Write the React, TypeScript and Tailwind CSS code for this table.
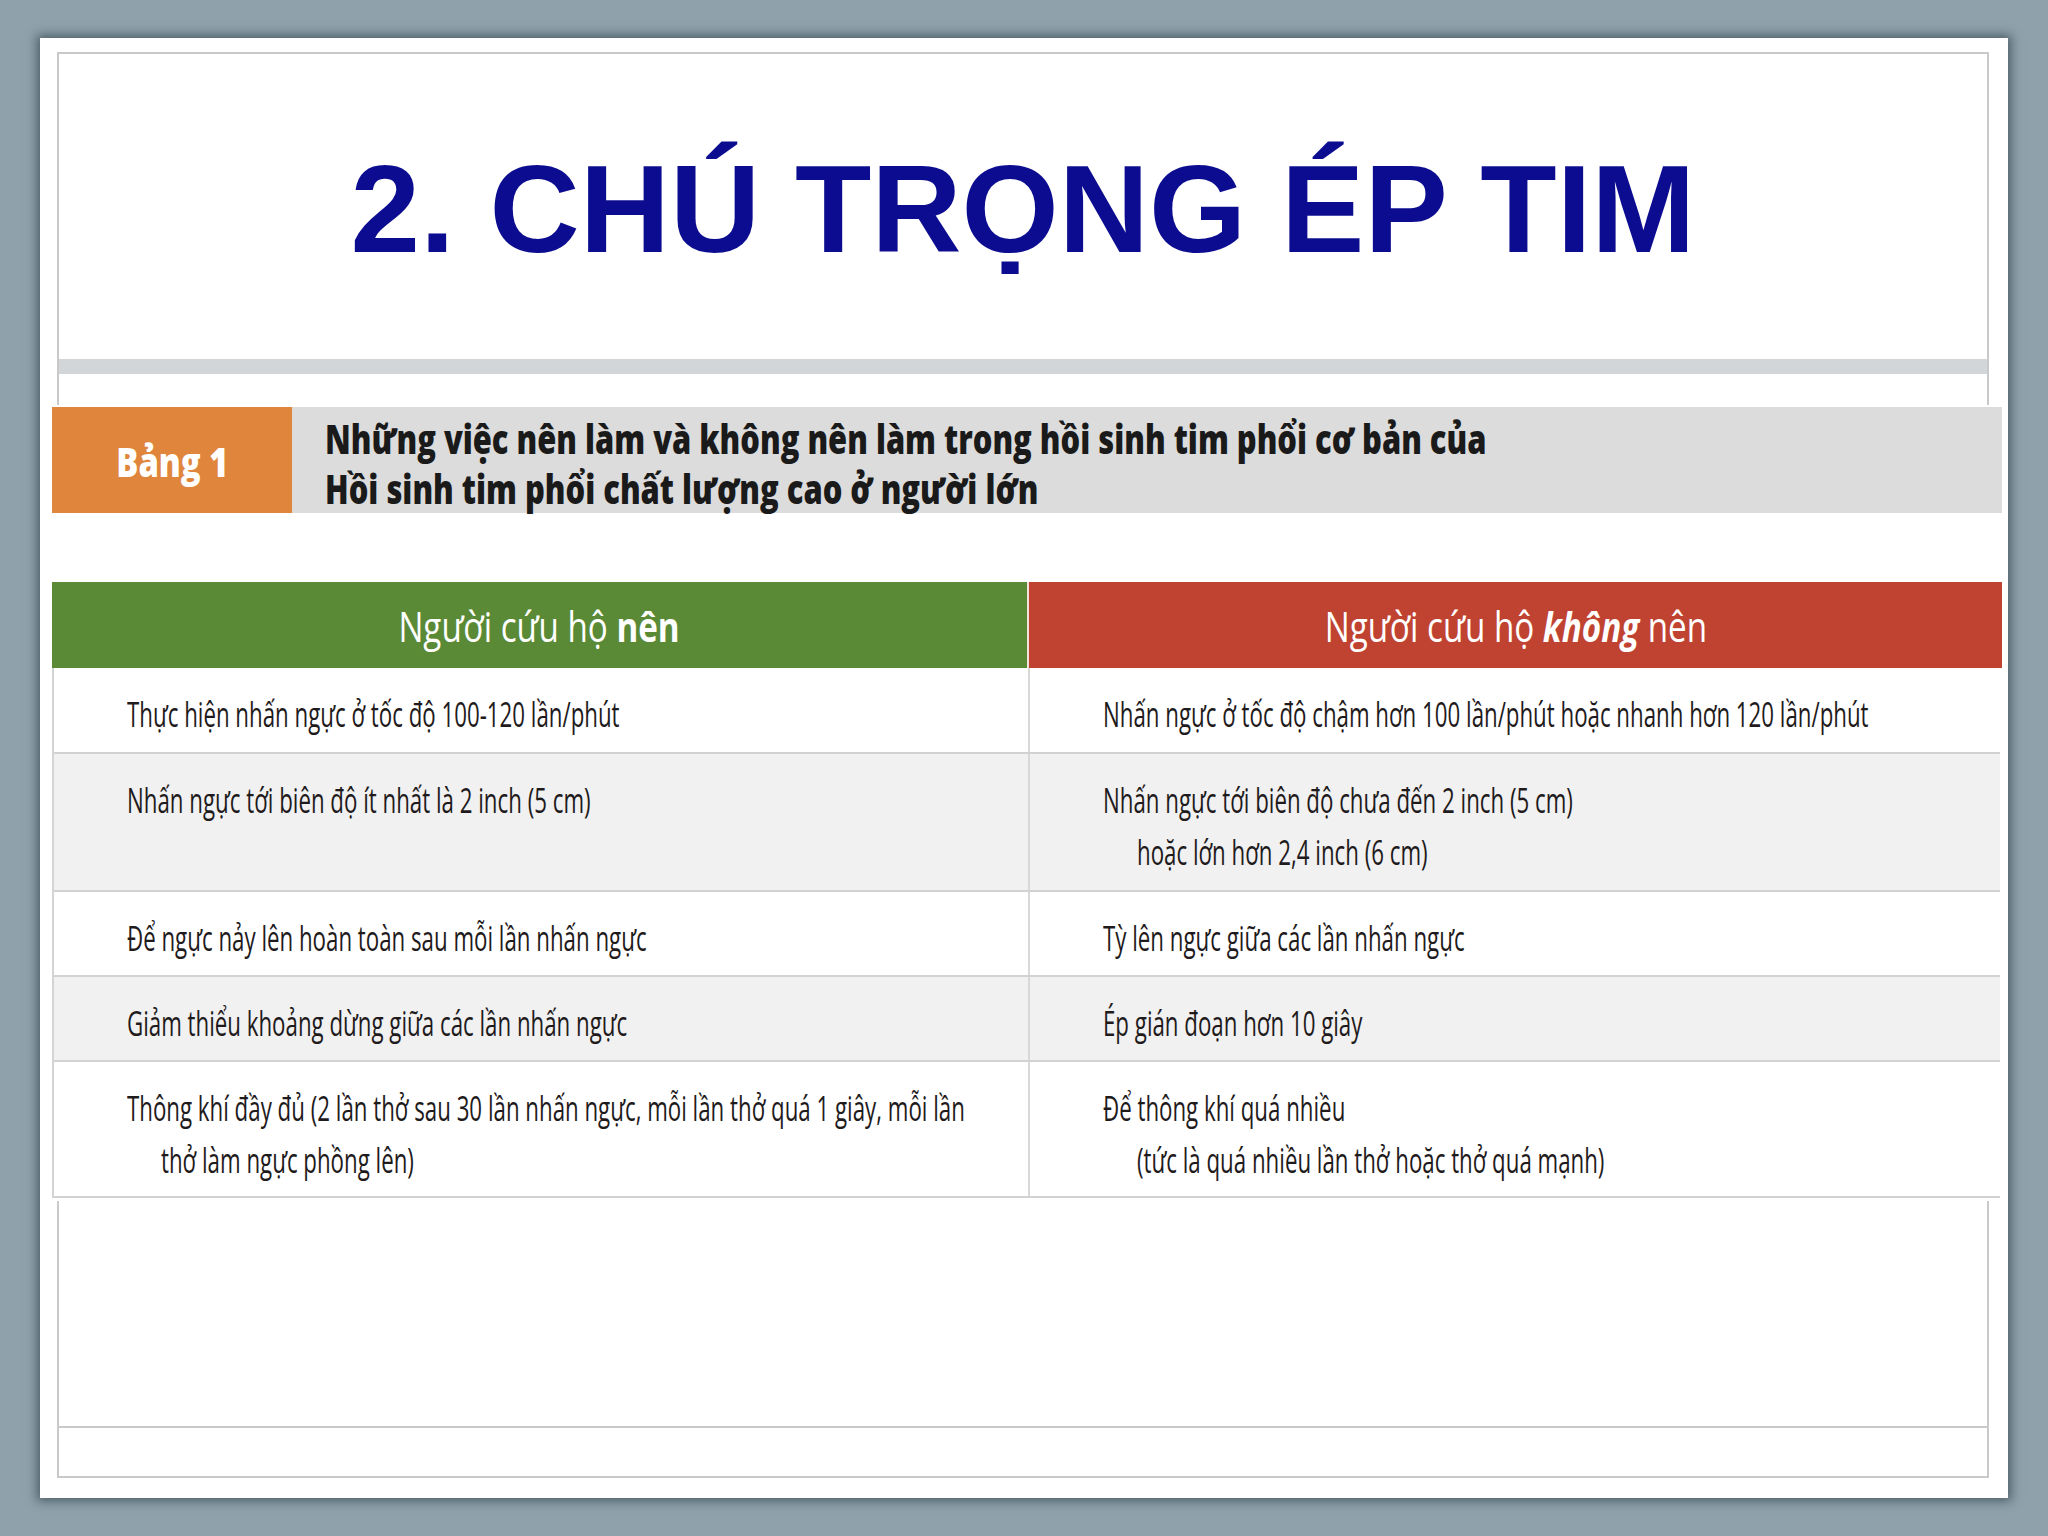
import React from "react";

const rows = [
  {
    bg: "bg-white",
    h: "h-[86px]",
    left: ["Thực hiện nhấn ngực ở tốc độ 100-120 lần/phút"],
    right: ["Nhấn ngực ở tốc độ chậm hơn 100 lần/phút hoặc nhanh hơn 120 lần/phút"],
  },
  {
    bg: "bg-[#f1f1f1]",
    h: "h-[138px]",
    left: ["Nhấn ngực tới biên độ ít nhất là 2 inch (5 cm)"],
    right: ["Nhấn ngực tới biên độ chưa đến 2 inch (5 cm)", "hoặc lớn hơn 2,4 inch (6 cm)"],
  },
  {
    bg: "bg-white",
    h: "h-[85px]",
    left: ["Để ngực nảy lên hoàn toàn sau mỗi lần nhấn ngực"],
    right: ["Tỳ lên ngực giữa các lần nhấn ngực"],
  },
  {
    bg: "bg-[#f1f1f1]",
    h: "h-[85px]",
    left: ["Giảm thiểu khoảng dừng giữa các lần nhấn ngực"],
    right: ["Ép gián đoạn hơn 10 giây"],
  },
  {
    bg: "bg-white",
    h: "h-[136px]",
    left: [
      "Thông khí đầy đủ (2 lần thở sau 30 lần nhấn ngực, mỗi lần thở quá 1 giây, mỗi lần",
      "thở làm ngực phồng lên)",
    ],
    right: ["Để thông khí quá nhiều", "(tức là quá nhiều lần thở hoặc thở quá mạnh)"],
  },
];

function CellText({ lines }: { lines: string[] }) {
  return (
    <div className="pl-[73px] pt-[20px] text-[34px] leading-[52px] font-medium text-[#1f1b1c]">
      {lines.map((l, i) => (
        <div key={i} className={i > 0 ? "pl-[34px] whitespace-nowrap" : "whitespace-nowrap"}>
          <span className="inline-block origin-left scale-x-[0.655]">{l}</span>
        </div>
      ))}
    </div>
  );
}

export default function App() {
  return (
    <div
      className="w-[2048px] h-[1536px] overflow-hidden bg-[#8fa2ab] pt-[38px] pl-[40px]"
      style={{ fontFamily: '"Open Sans", "Noto Sans", sans-serif' }}
    >
      {/* slide */}
      <div className="w-[1968px] h-[1460px] bg-white shadow-[0_0_10px_3px_rgba(40,55,65,0.65)] pt-[14px] pl-[17px]">
        {/* inner frame */}
        <div className="w-[1932px] h-[1426px] border-2 border-[#c9c9c9] flex flex-col">
          {/* title */}
          <div className="h-[305px] flex items-center justify-center pt-[4px]">
            <h1
              className="text-[125px] leading-[125px] font-bold text-[#0c0c90] whitespace-nowrap"
              style={{ fontFamily: '"Liberation Sans", Arial, sans-serif' }}
            >
              2. CHÚ TRỌNG ÉP TIM
            </h1>
          </div>
          <div className="h-[15px] bg-[#d2d6d8]" />
          <div className="h-[31px]" />

          {/* table */}
          <div className="ml-[-7px] w-[1950px] h-[796px] bg-white pt-[2px]">
            <div className="flex h-[106px]">
              <div className="w-[240px] bg-[#e0863c] flex items-center justify-center pt-[4px]">
                <span className="inline-block scale-x-[0.82] text-[40px] font-extrabold text-white whitespace-nowrap">
                  Bảng 1
                </span>
              </div>
              <div className="flex-1 bg-[#dcdcdc] pl-[33px] pt-[7px] text-[40px] leading-[50px] font-extrabold text-[#1a1a1a]">
                <div className="whitespace-nowrap">
                  <span className="inline-block origin-left scale-x-[0.772]">
                    Những việc nên làm và không nên làm trong hồi sinh tim phổi cơ bản của
                  </span>
                </div>
                <div className="whitespace-nowrap">
                  <span className="inline-block origin-left scale-x-[0.772]">
                    Hồi sinh tim phổi chất lượng cao ở người lớn
                  </span>
                </div>
              </div>
            </div>

            <div className="h-[69px]" />

            <div className="grid grid-cols-[975px_1fr] gap-x-[2px] h-[86px] bg-[#f3e3dc]">
              <div className="bg-[#5b8a37] flex items-center justify-center text-white text-[42px]">
                <span className="inline-block scale-x-[0.79] whitespace-nowrap">
                  Người cứu hộ <b>nên</b>
                </span>
              </div>
              <div className="bg-[#c04332] flex items-center justify-center text-white text-[42px]">
                <span className="inline-block scale-x-[0.79] whitespace-nowrap">
                  Người cứu hộ{" "}
                  <b>
                    <i>không</i>
                  </b>{" "}
                  nên
                </span>
              </div>
            </div>

            <div className="border-l-2 border-[#d4d4d4] w-[1948px]">
              {rows.map((r, i) => (
                <div key={i} className={`grid grid-cols-[976px_1fr] border-b-2 border-[#d2d2d2] ${r.h} ${r.bg}`}>
                  <div className="border-r-2 border-[#d8d8d8]">
                    <CellText lines={r.left} />
                  </div>
                  <div>
                    <CellText lines={r.right} />
                  </div>
                </div>
              ))}
            </div>
          </div>

          <div className="flex-1" />
          <div className="h-[2px] bg-[#c9c9c9]" />
          <div className="h-[48px]" />
        </div>
      </div>
    </div>
  );
}
